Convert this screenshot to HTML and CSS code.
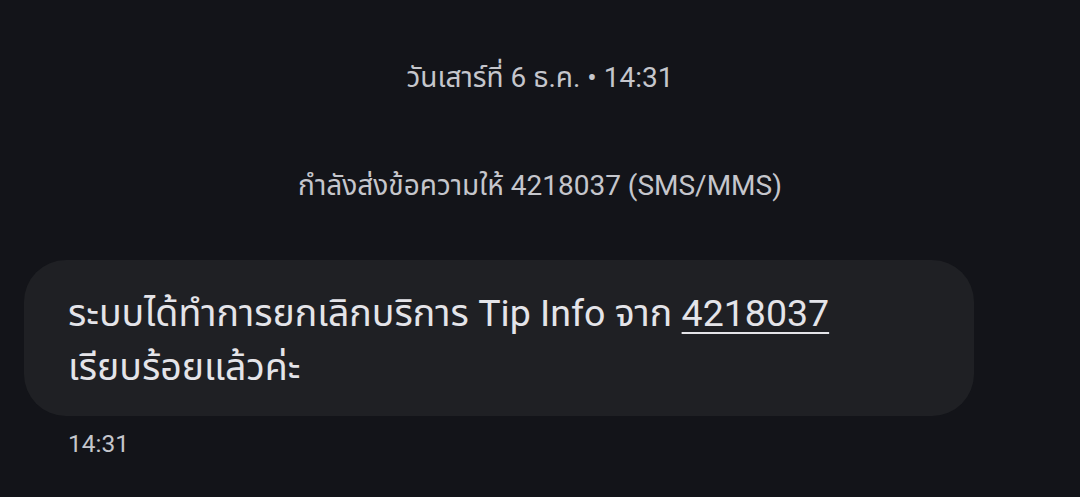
FILE: index.html
```html
<!DOCTYPE html>
<html lang="th">
<head>
<meta charset="utf-8">
<link rel="stylesheet" href="styles.css">
</head>
<body>
<main class="thread">
  <div class="date">วันเสาร์ที่ 6 ธ.ค. • 14:31</div>
  <div class="status">กำลังส่งข้อความให้ 4218037 (SMS/MMS)</div>
  <div class="bubble">ระบบได้ทำการยกเลิกบริการ Tip Info จาก <span class="link">4218037</span><br>เรียบร้อยแล้วค่ะ</div>
  <div class="time">14:31</div>
</main>
</body>
</html>
```
FILE: styles.css
```css
html, body {
  margin: 0;
  padding: 0;
  background: #131419;
  height: 100%;
  overflow: hidden;
}
.thread {
  display: flex;
  flex-direction: column;
  font-family: Roboto, "Noto Sans", "Noto Sans Thai", sans-serif;
  color: #c5c6cc;
}
.date {
  text-align: center;
  font-size: 28px;
  line-height: 32px;
  margin-top: 62px;
}
.status {
  text-align: center;
  font-size: 28px;
  line-height: 32px;
  margin-top: 76px;
}
.bubble {
  align-self: flex-start;
  box-sizing: border-box;
  width: 950px;
  margin: 58px 0 0 24px;
  padding: 26px 44px 22px;
  background: #1f2024;
  border-radius: 42px;
  color: #e4e4e9;
  font-size: 37.5px;
  line-height: 54px;
}
.link {
  text-decoration: underline;
  text-underline-offset: 6px;
  text-decoration-thickness: 2px;
}
.time {
  margin: 12px 0 0 68px;
  font-size: 24.5px;
  line-height: 32px;
}
```
